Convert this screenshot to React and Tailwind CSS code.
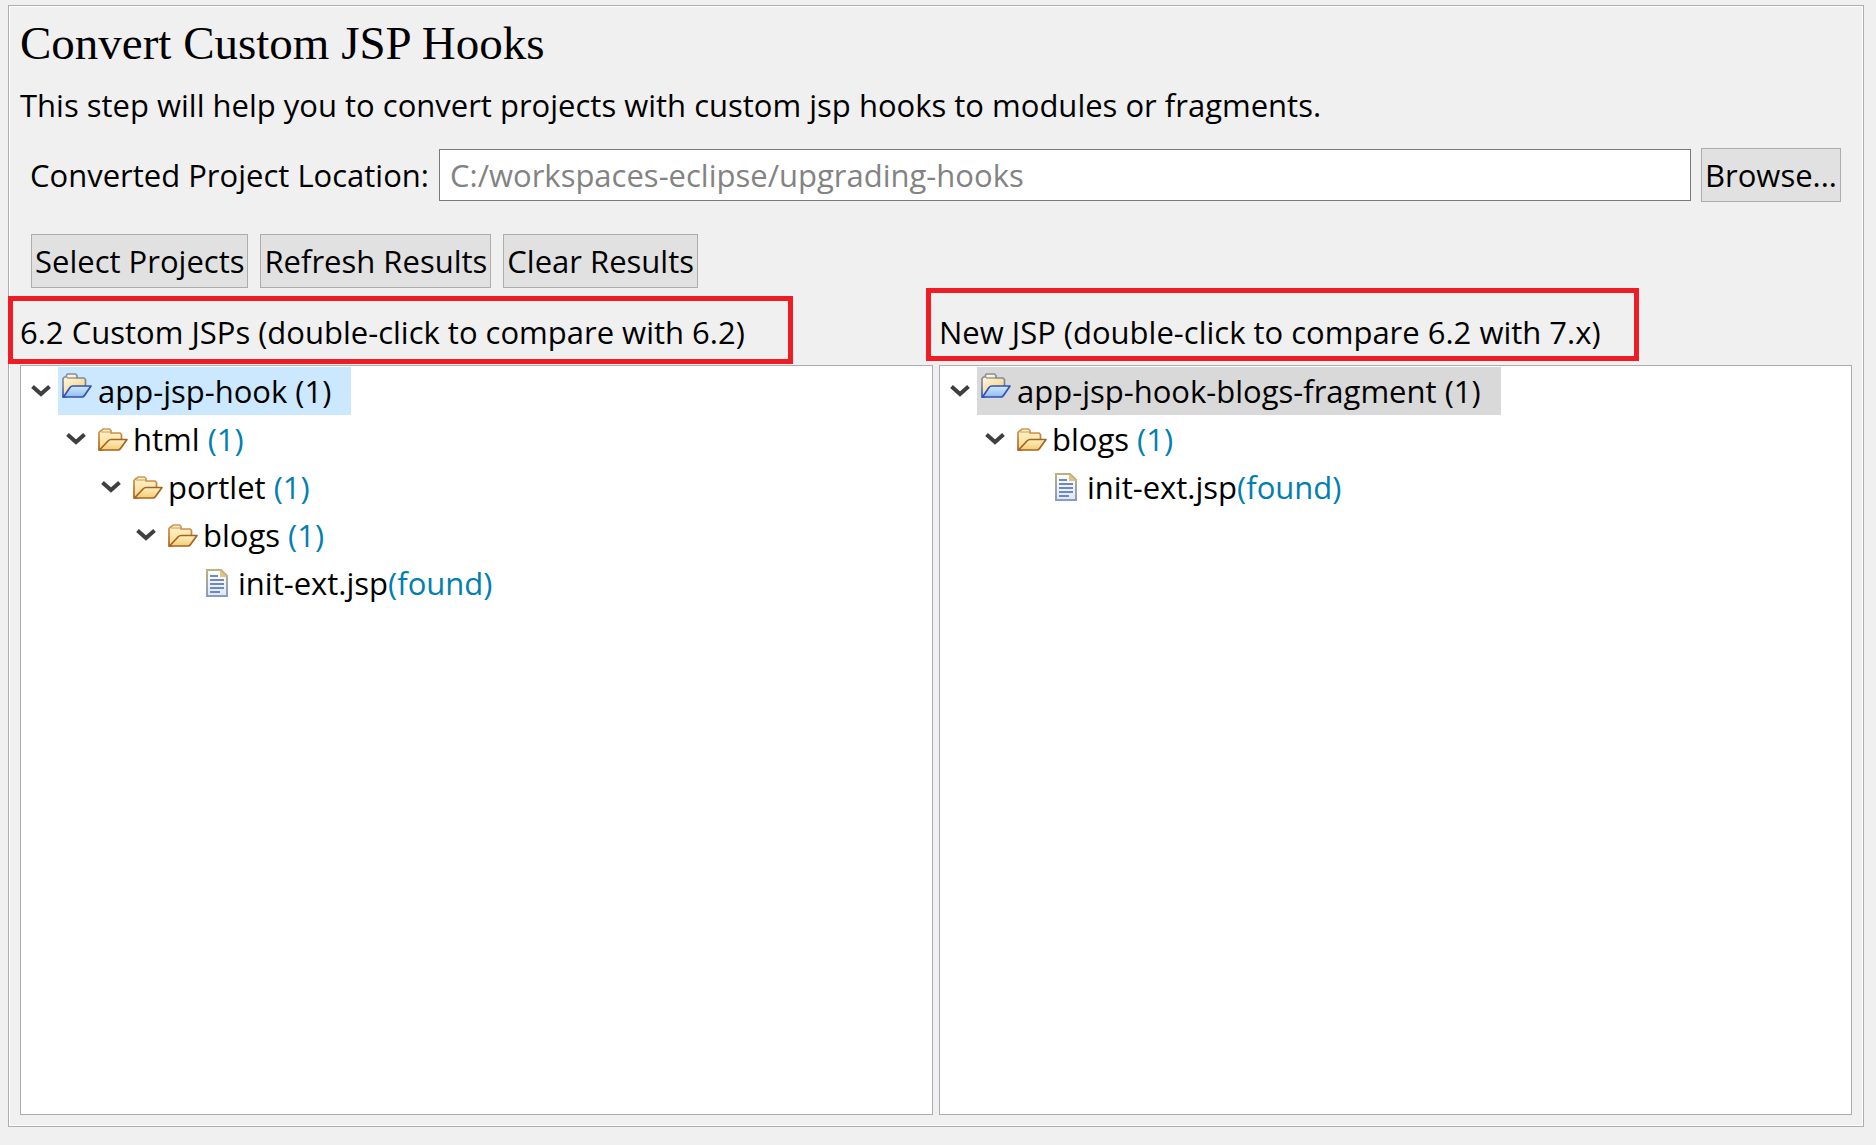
import React from "react";

function Chevron() {
  return (
    <svg width="20" height="14" viewBox="0 0 20 14" aria-hidden="true">
      <path d="M1.5 2.5 L10 10 L18.5 2.5" fill="none" stroke="#3f3f3f" strokeWidth="4" />
    </svg>
  );
}

function ProjectFolder() {
  return (
    <svg width="30" height="26" viewBox="0 0 30 26" aria-hidden="true">
      <defs>
        <linearGradient id="projectBack" x1="0" y1="0" x2="0.6" y2="1">
          <stop offset="0" stopColor="#fffdf0" />
          <stop offset="1" stopColor="#f6cf78" />
        </linearGradient>
        <linearGradient id="projectFront" x1="0" y1="0" x2="0" y2="1">
          <stop offset="0" stopColor="#d3eafc" />
          <stop offset="1" stopColor="#8cbdf2" />
        </linearGradient>
        <linearGradient id="projectEdge" x1="0" y1="0" x2="0" y2="1">
          <stop offset="0" stopColor="#8b8f96" />
          <stop offset="0.5" stopColor="#7480a0" />
          <stop offset="1" stopColor="#2f4fc0" />
        </linearGradient>
      </defs>
      <path d="M1 25 V6.500 L2.500 5 H4.500 V3 L5.500 2 H13.500 L15 3.500 V6 H22 L23.500 7.500 V14 L4 25 Z" fill="url(#projectBack)" stroke="url(#projectEdge)" strokeWidth="1.700" />
      <path d="M5 6 H15" stroke="#8b8f96" strokeWidth="1.300" />
      <path d="M1.500 25 L8 15.500 Q9 14 11 14 H29 L22.500 23.500 Q21.500 25 20 25 Z" fill="url(#projectFront)" stroke="#3450b4" strokeWidth="1.700" strokeLinejoin="round" />
    </svg>
  );
}

function Folder() {
  return (
    <svg width="30" height="24" viewBox="0 0 30 24" aria-hidden="true">
      <defs>
        <linearGradient id="folderBack" x1="0" y1="0" x2="0" y2="1">
          <stop offset="0" stopColor="#fdf3cf" />
          <stop offset="1" stopColor="#fbd98c" />
        </linearGradient>
        <linearGradient id="folderFront" x1="0" y1="0" x2="0" y2="1">
          <stop offset="0" stopColor="#fdf0c6" />
          <stop offset="1" stopColor="#f6cb72" />
        </linearGradient>
        <linearGradient id="folderEdge" x1="0" y1="0" x2="0" y2="1">
          <stop offset="0" stopColor="#cf9a55" />
          <stop offset="1" stopColor="#a5641e" />
        </linearGradient>
      </defs>
      <path d="M1 23 V5.500 L2.500 4 L4 3 L5 2 H11.500 L13 3.500 V6 H22 L23.500 7.500 V13 L4 23 Z" fill="url(#folderBack)" stroke="url(#folderEdge)" strokeWidth="1.700" />
      <path d="M3 5 H12" stroke="#dcae6c" strokeWidth="1.300" />
      <path d="M1.500 23 L10 14 Q11.500 12.500 13 12.500 H29 L22.500 21.500 Q21.500 23 20 23 Z" fill="url(#folderFront)" stroke="#a5641e" strokeWidth="1.700" strokeLinejoin="round" />
    </svg>
  );
}

function FileIcon() {
  return (
    <svg width="22" height="28" viewBox="0 0 22 28" aria-hidden="true">
      <defs>
        <linearGradient id="fileFill" x1="0" y1="0" x2="0" y2="1">
          <stop offset="0" stopColor="#ffffff" />
          <stop offset="1" stopColor="#dbe8fa" />
        </linearGradient>
        <linearGradient id="fileEdge" x1="0" y1="0" x2="0" y2="1">
          <stop offset="0" stopColor="#bdb27c" />
          <stop offset="1" stopColor="#8c9bbd" />
        </linearGradient>
      </defs>
      <path d="M1 1 H15 L21 7 V27 H1 Z" fill="url(#fileFill)" stroke="url(#fileEdge)" strokeWidth="2" />
      <path d="M14 1 V8 H21 Z" fill="#e2c47c" />
      <path d="M4 7 H12 M4 11 H18 M4 15 H18 M4 19 H18 M4 23 H14" stroke="#7188bb" strokeWidth="2" />
    </svg>
  );
}

const icons = { project: ProjectFolder, folder: Folder, file: FileIcon };

function TreeItem({ node, highlight }) {
  const Icon = icons[node.kind];
  const isProject = node.kind === "project";
  const isFile = node.kind === "file";
  return (
    <li role="treeitem" aria-expanded={isFile ? undefined : true} aria-selected={isProject}>
      <div className="flex h-12 items-center">
        <span className="flex w-[27px] shrink-0">{!isFile && <Chevron />}</span>
        <span className={`flex h-12 items-center whitespace-pre pr-5 ${isProject ? highlight : ""}`}>
          <span className={`flex w-10 shrink-0 ${isFile ? "pl-2" : isProject ? "pb-3 pl-1" : "pl-[5px]"}`}>
            <Icon />
          </span>
          <span>{node.name}</span>
          {node.note && <span className="text-[#0080b0]">{node.note}</span>}
        </span>
      </div>
      {node.child && (
        <ul role="group" className="pl-[35px]">
          <TreeItem node={node.child} />
        </ul>
      )}
    </li>
  );
}

function JspPane({ id, title, mark, root, highlight }) {
  return (
    <section className="flex min-w-0 flex-1 flex-col">
      <h2 id={id} className="relative h-[65px] whitespace-nowrap pt-3 leading-10">
        <span className={`pointer-events-none absolute border-[5px] border-[#ee1c24] ${mark}`} />
        {title}
      </h2>
      <ul
        role="tree"
        aria-labelledby={id}
        className="flex-1 border border-[#abadb3] bg-white pl-[10px] pt-px"
      >
        <TreeItem node={root} highlight={highlight} />
      </ul>
    </section>
  );
}

function Button({ children }) {
  return (
    <button
      type="button"
      className="h-[54px] shrink-0 whitespace-nowrap border border-[#adadad] bg-[#e1e1e1] px-[3px]"
    >
      {children}
    </button>
  );
}

const file = { kind: "file", name: "init-ext.jsp", note: "(found)" };
const blogs = { kind: "folder", name: "blogs", note: " (1)", child: file };
const customJsps = {
  kind: "project",
  name: "app-jsp-hook (1)",
  child: {
    kind: "folder",
    name: "html",
    note: " (1)",
    child: { kind: "folder", name: "portlet", note: " (1)", child: blogs },
  },
};
const newJsps = { kind: "project", name: "app-jsp-hook-blogs-fragment (1)", child: blogs };

export default function App() {
  return (
    <div className="flex min-h-screen flex-col bg-[#f0f0f0] pb-[18px] pl-2 pr-3 pt-[5px] font-['Open_Sans','Noto_Sans',sans-serif] text-[31px] text-black">
      <main className="flex flex-1 flex-col border border-[#abadb3]">
        <div className="flex flex-1 flex-col border border-white px-[10px] pb-[10px]">
          <h1 className="pt-[6px] font-['Liberation_Serif',serif] text-[47px] leading-[60px]">
            Convert Custom JSP Hooks
          </h1>
          <p className="pt-3 leading-10">
            This step will help you to convert projects with custom jsp hooks to modules or fragments.
          </p>
          <form className="flex items-center gap-[10px] pl-[10px] pr-[11px] pt-[23px]">
            <label htmlFor="location" className="shrink-0 whitespace-nowrap">
              Converted Project Location:
            </label>
            <input
              id="location"
              type="text"
              disabled
              value="C:/workspaces-eclipse/upgrading-hooks"
              className="h-[52px] min-w-0 flex-1 border border-[#7a7a7a] bg-white px-[10px] text-[#838383]"
            />
            <Button>Browse...</Button>
          </form>
          <div className="flex gap-3 pl-[11px] pt-8">
            <Button>Select Projects</Button>
            <Button>Refresh Results</Button>
            <Button>Clear Results</Button>
          </div>
          <div className="mt-3 flex flex-1 gap-[6px]">
            <JspPane
              id="custom-jsps"
              title="6.2 Custom JSPs (double-click to compare with 6.2)"
              mark="-left-3 -top-1 h-[68px] w-[785px]"
              root={customJsps}
              highlight="bg-[#cce8ff]"
            />
            <JspPane
              id="new-jsps"
              title="New JSP (double-click to compare 6.2 with 7.x)"
              mark="-left-[13px] -top-3 h-[73px] w-[713px]"
              root={newJsps}
              highlight="bg-[#d9d9d9]"
            />
          </div>
        </div>
      </main>
    </div>
  );
}
